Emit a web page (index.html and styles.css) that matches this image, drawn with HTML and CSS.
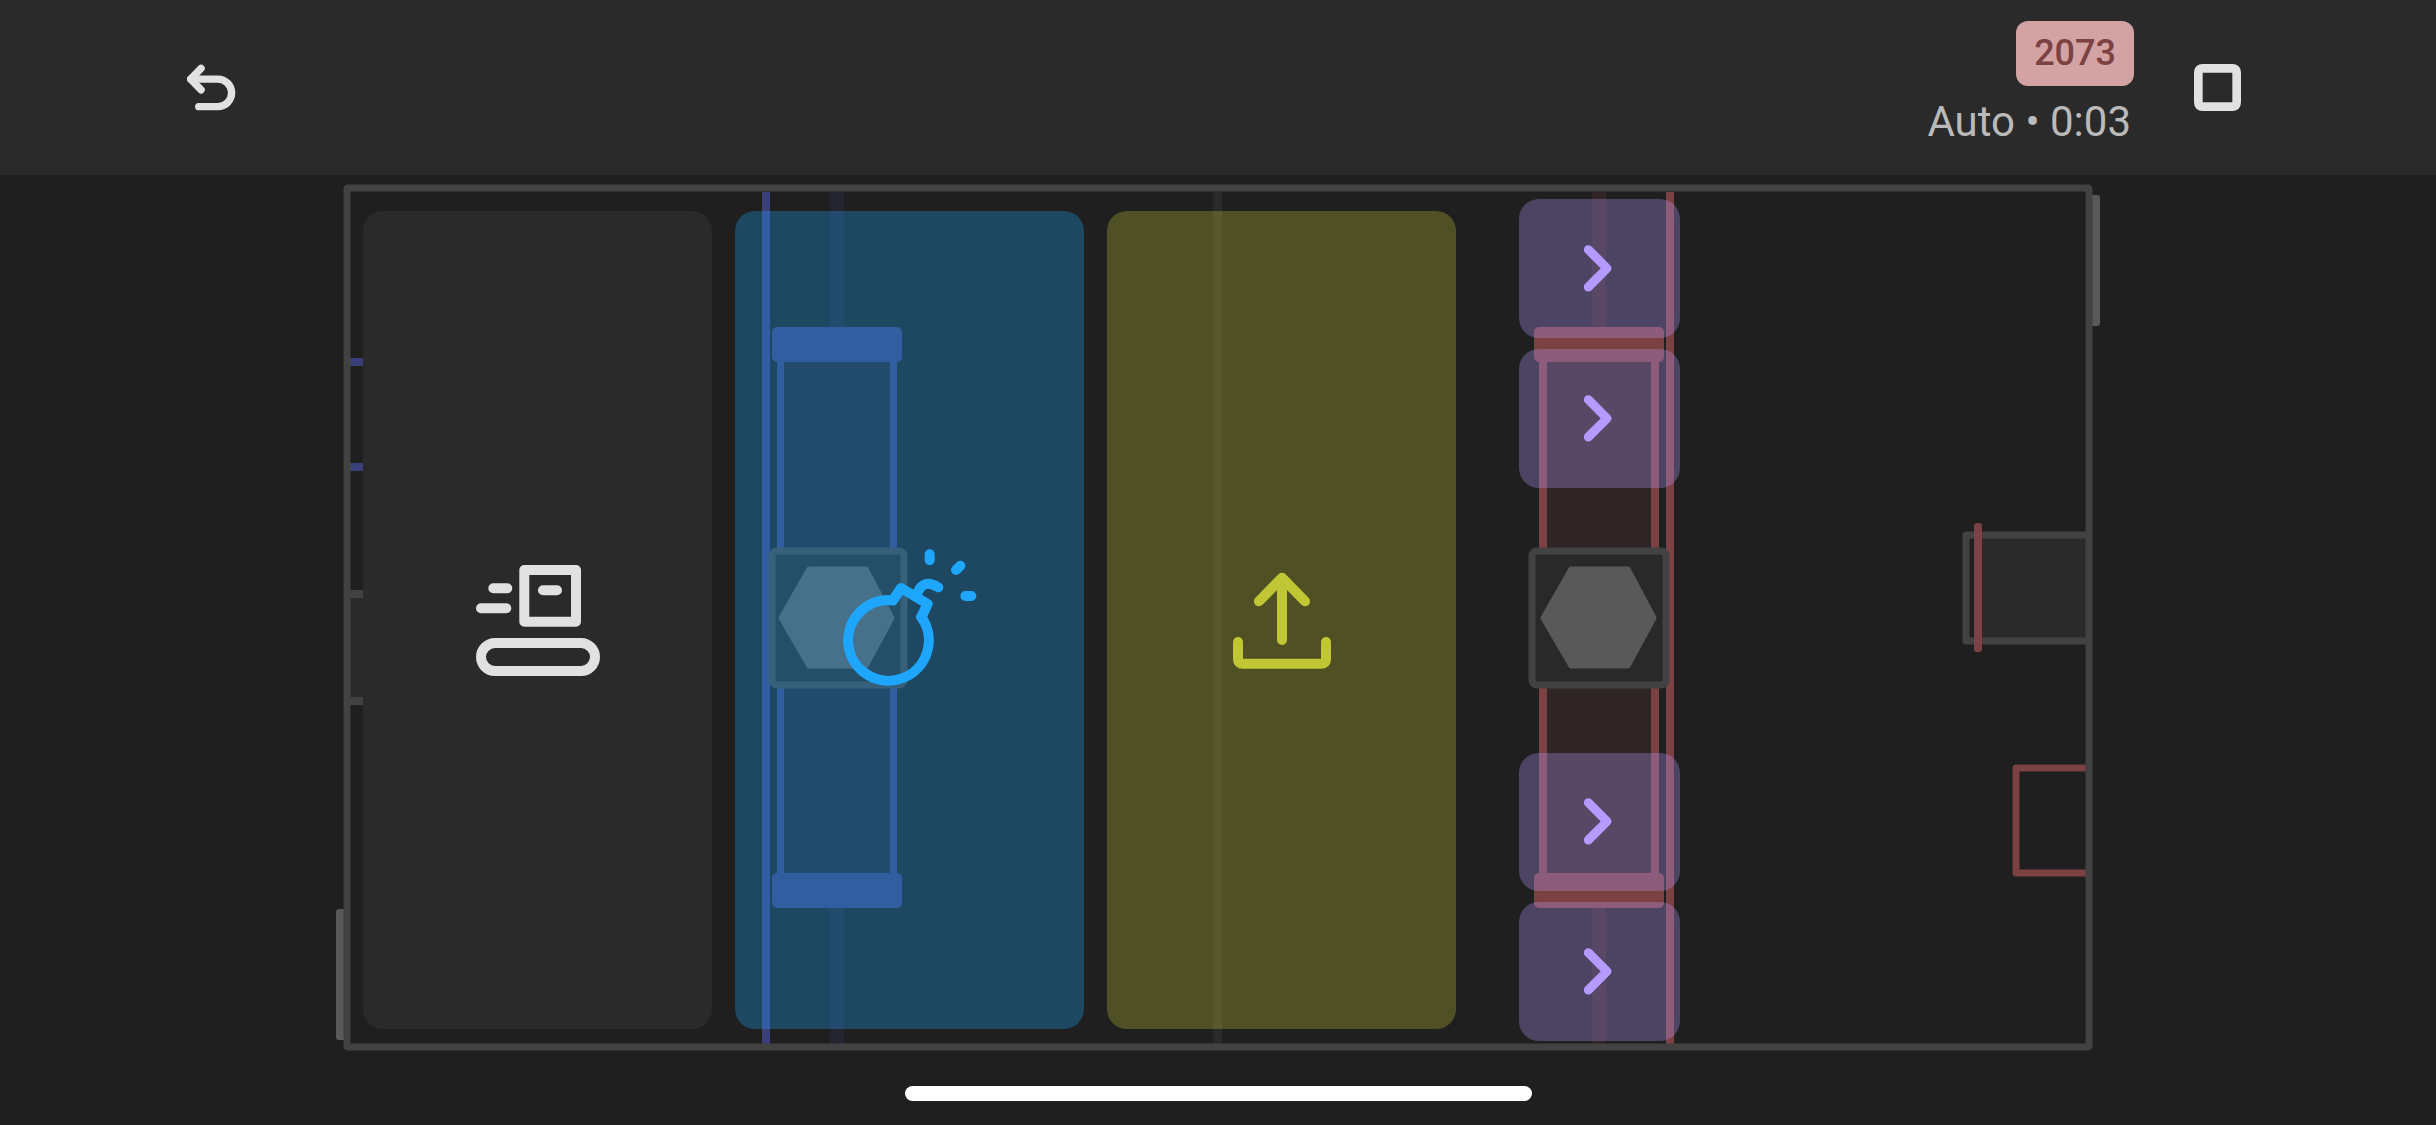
FILE: index.html
```html
<!DOCTYPE html>
<html lang="en">

<head>
    <meta charset="UTF-8">
    <meta name="viewport" content="width=device-width, initial-scale=1.0">
    <title>Match 2073</title>
    <link rel="stylesheet" href="styles.css">
</head>

<body>

    <header class="topbar">
        <button class="icon-button" aria-label="Undo">
            <svg width="49" height="47" viewBox="111 102 146 140" fill="none" stroke="currentColor" stroke-width="22" stroke-linecap="round" stroke-linejoin="round">
                <path d="M146 229H203a41 41 0 0 0 0-82H122" />
                <path d="M153 115L122 147L153 179" />
            </svg>
        </button>

        <div class="match">
            <div class="info">
                <b class="team">2073</b>
                <span class="timer">Auto • 0:03</span>
            </div>
            <button class="icon-button" aria-label="Stop">
                <svg width="47" height="47" viewBox="0 0 141 141" fill="none" stroke="currentColor" stroke-width="26">
                    <path d="M26 13H115Q128 13 128 26V115Q128 128 115 128H26Q13 128 13 115V26Q13 13 26 13Z" />
                </svg>
            </button>
        </div>
    </header>

    <main class="main">
        <div class="field">
            <svg class="map" viewBox="343 184 1750 867">
                <!-- doors -->
                <rect class="door" x="336" y="909" width="12" height="131" rx="3" />
                <rect class="door" x="2088" y="195" width="12" height="131" rx="3" />

                <!-- left wall -->
                <g class="blue">
                    <rect x="350" y="358" width="30" height="8" />
                    <rect x="350" y="463" width="30" height="8" />
                </g>
                <rect class="panel" x="350" y="594" width="30" height="108" />
                <rect class="grey" x="350" y="590" width="30" height="8" />
                <rect class="grey" x="350" y="697" width="30" height="8" />

                <!-- center line -->
                <rect class="panel" x="1213" y="192" width="9" height="852" />

                <!-- blue side -->
                <g class="blue">
                    <rect x="762" y="192" width="8" height="852" />
                    <rect class="faint" x="830" y="192" width="14" height="136" />
                    <rect class="faint" x="830" y="907" width="14" height="137" />
                    <rect class="faint" x="784" y="362" width="106" height="511" />
                    <rect x="777" y="360" width="7" height="515" />
                    <rect x="890" y="360" width="7" height="515" />
                    <rect x="772" y="327" width="130" height="35" rx="5" />
                    <rect x="772" y="873" width="130" height="35" rx="5" />
                </g>
                <rect class="hub" x="772" y="551" width="132" height="134" rx="5" />
                <path class="hex" d="M781 618L809 569H866L892 618L866 666H809Z" />

                <!-- red side -->
                <g class="red">
                    <rect x="1666" y="192" width="8" height="852" />
                    <rect class="faint" x="1592" y="192" width="14" height="136" />
                    <rect class="faint" x="1592" y="907" width="14" height="137" />
                    <rect class="faint" x="1547" y="362" width="104" height="511" />
                    <rect x="1539" y="360" width="8" height="515" />
                    <rect x="1651" y="360" width="8" height="515" />
                    <rect x="1534" y="327" width="130" height="35" rx="5" />
                    <rect x="1534" y="873" width="130" height="35" rx="5" />
                </g>
                <rect class="hub" x="1532" y="551" width="134" height="134" rx="5" />
                <path class="hex" d="M1543 618L1571 569H1628L1654 618L1628 666H1571Z" />

                <!-- right wall -->
                <rect class="panel" x="1980" y="534" width="108" height="107" />
                <path class="grey-line" d="M2088 535H1966V641H2088" />
                <rect class="red" x="1974" y="523" width="8" height="129" rx="3" />
                <path class="red-line" d="M2088 768H2016V873H2088" />

                <!-- border -->
                <rect class="border" x="347" y="188" width="1742" height="859" rx="1" />
            </svg>

            <div class="actions">
                <button class="action intake" aria-label="Intake">
                    <svg width="124" height="111" viewBox="0 0 124 111" fill="none" stroke="currentColor" stroke-width="10" stroke-linecap="round" stroke-linejoin="round">
                        <rect x="48.3" y="5" width="51.7" height="51.7" />
                        <rect x="5" y="78" width="114" height="28" rx="14" />
                        <path d="M67 25.3H81M17.3 23.3H31.3M5 43.2H30.3" />
                    </svg>
                </button>
                <button class="action bomb" aria-label="Bomb">
                    <svg width="134" height="142" viewBox="308 147 402 426" fill="none" stroke="currentColor" stroke-width="30" stroke-linecap="round" stroke-linejoin="round">
                        <path d="M543 351A121 121 0 1 1 458 301L482 264L562 312L543 351" />
                        <path d="M442 301L458 301L472 280M555 327L543 351L550 362" stroke-linecap="butt" stroke-linejoin="miter" />
                        <path d="M532 277Q552 234 594 262" />
                        <path d="M568 163V181M647 210L660 197M675 288H693" />
                    </svg>
                </button>
                <button class="action upload" aria-label="Outtake">
                    <svg width="98" height="98" viewBox="129 93 294 294" fill="none" stroke="currentColor" stroke-width="30" stroke-linecap="round" stroke-linejoin="round">
                        <path d="M276 300V113M207 184L276 113L345 184" />
                        <path d="M144 306V357Q144 371 159 371H393Q408 371 408 357V306" />
                    </svg>
                </button>
                <div class="passes">
                    <div class="pair">
                        <button class="action pass" aria-label="Pass lane 1">
                            <svg width="31" height="47" viewBox="282 227 93 141" fill="none" stroke="currentColor" stroke-width="27" stroke-linecap="round" stroke-linejoin="round">
                                <path d="M295 241L351 297L295 353" />
                            </svg>
                        </button>
                        <button class="action pass" aria-label="Pass lane 2">
                            <svg width="31" height="47" viewBox="282 227 93 141" fill="none" stroke="currentColor" stroke-width="27" stroke-linecap="round" stroke-linejoin="round">
                                <path d="M295 241L351 297L295 353" />
                            </svg>
                        </button>
                    </div>
                    <div class="pair">
                        <button class="action pass" aria-label="Pass lane 3">
                            <svg width="31" height="47" viewBox="282 227 93 141" fill="none" stroke="currentColor" stroke-width="27" stroke-linecap="round" stroke-linejoin="round">
                                <path d="M295 241L351 297L295 353" />
                            </svg>
                        </button>
                        <button class="action pass" aria-label="Pass lane 4">
                            <svg width="31" height="47" viewBox="282 227 93 141" fill="none" stroke="currentColor" stroke-width="27" stroke-linecap="round" stroke-linejoin="round">
                                <path d="M295 241L351 297L295 353" />
                            </svg>
                        </button>
                    </div>
                </div>
            </div>
        </div>
    </main>

    <footer class="bottom">
        <div class="home-bar"></div>
    </footer>

</body>

</html>
```
FILE: styles.css
```css
body {
    margin: 0;
    min-height: 100vh;
    display: flex;
    flex-direction: column;
    background-color: #1f1f1f;
    font-family: Roboto, sans-serif;
}

button {
    padding: 0;
    border: none;
    background: none;
    cursor: pointer;
}

svg {
    display: block;
}

.topbar {
    min-height: 175px;
    padding: 0 195px 0 187px;
    box-sizing: border-box;
    display: flex;
    align-items: center;
    justify-content: space-between;
    background-color: #2a2a2a;
}

.icon-button {
    color: #e1e1e1;
}

.match {
    display: flex;
    align-items: center;
    gap: 60px;
}

.info {
    padding-bottom: 4px;
    display: flex;
    flex-direction: column;
    align-items: flex-end;
    gap: 8px;
}

.team {
    padding: 0 18px;
    border-radius: 12px;
    background-color: #d3a3a4;
    color: #7c4142;
    font-size: 36px;
    font-weight: 500;
    line-height: 65px;
}

.timer {
    padding-right: 3px;
    color: #bababa;
    font-size: 42px;
    line-height: 56px;
}

.main {
    flex: 1;
    padding: 9px 343px;
}

.field {
    position: relative;
}

.map {
    width: 100%;
    overflow: visible;
}

.door,
.hex {
    fill: #595959;
}

.hex {
    stroke: #595959;
    stroke-width: 5;
    stroke-linejoin: round;
}

.grey {
    fill: #424242;
}

.panel {
    fill: #2a2a2a;
}

.blue {
    fill: #394079;
}

.red {
    fill: #7c4142;
}

.faint {
    opacity: 0.19;
}

.hub {
    fill: #292929;
    stroke: #424242;
    stroke-width: 7;
}

.border,
.grey-line,
.red-line {
    fill: none;
    stroke: #424242;
    stroke-width: 7;
    stroke-linejoin: round;
}

.red-line {
    stroke: #7c4142;
}

/* buttons over the field */
.actions {
    position: absolute;
    top: 15px;
    right: 0;
    bottom: 10px;
    left: 20px;
    display: grid;
    grid-template-columns: 349fr 349fr 349fr 201fr 390fr;
    gap: 23px;
}

.action {
    margin: 12px 0;
    border-radius: 20px;
    display: flex;
    align-items: center;
    justify-content: center;
}

.intake {
    background-color: #2a2a2a;
    color: #e1e1e1;
}

.bomb {
    background-color: rgba(30, 166, 252, 0.3);
    color: #1ea6fc;
}

.upload {
    background-color: rgba(193, 198, 52, 0.3);
    color: #c1c634;
}

.passes {
    padding-left: 40px;
    display: grid;
    grid-template-rows: 288fr 288fr;
    row-gap: 265px;
}

.pair {
    display: grid;
    grid-template-rows: 1fr 1fr;
    gap: 11px;
}

.pass {
    margin: 0;
    background-color: rgba(181, 155, 255, 0.3);
    color: #b59bff;
}

.bottom {
    padding-bottom: 24px;
    display: flex;
    justify-content: center;
}

.home-bar {
    width: 627px;
    height: 15px;
    border-radius: 8px;
    background-color: white;
}
```
